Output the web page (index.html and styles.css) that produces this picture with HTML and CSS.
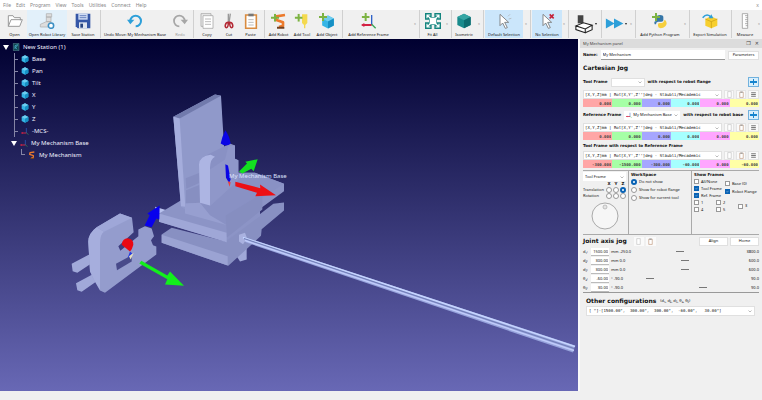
FILE: index.html
```html
<!DOCTYPE html>
<html lang="en">
<head>
<meta charset="utf-8">
<title>New Station (1)</title>
<link rel="stylesheet" href="styles.css">
</head>
<body>
<svg class="defs" aria-hidden="true">
  <symbol id="cube" viewBox="0 0 24 24"><path d="M12 1 22 6v12l-10 5-10-5V6z" fill="#36b5e6"/><path d="M2 6l10 5 10-5-10-5z" fill="#6fcdf0"/><path d="M12 11v12l10-5V6z" fill="#1790c4"/></symbol>
  <symbol id="plus" viewBox="0 0 12 12"><path d="M6 0v12M0 6h12" stroke="#7cb342" stroke-width="3" fill="none"/></symbol>
  <symbol id="axes" viewBox="0 0 24 24"><path d="M16 18V3" stroke="#2f62c8" stroke-width="2"/><path d="M16 18H2" stroke="#d32243" stroke-width="3"/><path d="m16 17 6 6" stroke="#3aa655" stroke-width="2"/><path d="m0 18 5-3v6z" fill="#d32243"/></symbol>
  <symbol id="arm" viewBox="0 0 24 24"><path d="M19 3 6 5l-1 5 11 4v5l-6 2" fill="none" stroke="#ec7a2c" stroke-width="4" stroke-linejoin="round"/><path d="M7 22h11" stroke="#704020" stroke-width="3"/></symbol>
  <symbol id="cursor" viewBox="0 0 24 24"><path d="M6 2v17l4-4 4 8 3-1-4-8h6z" fill="#fff" stroke="#777" stroke-width="1.3"/></symbol>
  <symbol id="page" viewBox="0 0 12 12"><path d="M3 1h6v10H3z" fill="#fff" stroke="#bbb"/></symbol>
  <symbol id="clip" viewBox="0 0 12 12"><path d="M3 2h6v9H3z" fill="#fff" stroke="#b98c6c"/><path d="M4 1h4v2H4z" fill="#999"/></symbol>
  <symbol id="lines" viewBox="0 0 12 12"><path d="M2 3h8M2 6h8M2 9h8" stroke="#666" stroke-width="1.5"/></symbol>
</svg>

<header>
  <nav class="menu" aria-label="Main menu">
    <a href="#">File</a><a href="#">Edit</a><a href="#">Program</a><a href="#">View</a><a href="#">Tools</a><a href="#">Utilities</a><a href="#">Connect</a><a href="#">Help</a>
    <span class="menu-close">x</span>
  </nav>
  <div class="toolbar">
    <button><svg viewBox="0 0 24 24"><path d="M2 20V4h7l2 3h9v4M2 20l4-10h17l-4 10z" fill="#fff" stroke="#9a9a9a" stroke-width="1.5"/></svg>Open</button>
    <button class="hover"><svg viewBox="0 0 24 24"><path d="M11 1h8v5h-8zM11 6h7v7h-7zM2 21v-4l9-4h7v8z" fill="#ddd" stroke="#aaa"/><circle cx="18" cy="19" r="4" fill="#fff" stroke="#3b8fc4" stroke-width="2.4"/></svg>Open Robot Library</button>
    <button><svg viewBox="0 0 24 24"><path d="M1 1h22v22H4l-3-3z" fill="#3556a6"/><path d="M5 1h14v9H5z" fill="#cfdcf4"/><path d="M6 14h12v9H6z" fill="#dfe4ee"/><path d="M7 4h10M7 7h10" stroke="#3556a6"/><path d="M8 16h4v6H8z" fill="#274380"/></svg>Save Station</button>
    <i class="sep"></i>
    <button><svg viewBox="0 0 24 24"><path d="M5 12a8 8 0 1 1 8 8" fill="none" stroke="#2d9fd9" stroke-width="3"/><path d="M0 10h11l-6 7z" fill="#2d9fd9"/></svg>Undo Move: My Mechanism Base</button>
    <button class="dim"><svg viewBox="0 0 24 24"><path d="M19 12a8 8 0 1 0-8 8" fill="none" stroke="#a6a6a6" stroke-width="2.6"/><path d="M24 10H13l6 7z" fill="#a6a6a6"/></svg>Redo</button>
    <i class="sep"></i>
    <button><svg viewBox="0 0 24 24"><path d="M3 1h15v19H3z" fill="#eee" stroke="#999"/><path d="M6 4h15v19H6z" fill="#fff" stroke="#999"/><path d="M9 9h9M9 13h9M9 17h9" stroke="#999"/></svg>Copy</button>
    <button><svg viewBox="0 0 24 24"><path d="M11 1v14M14 1l-2 14" stroke="#999" stroke-width="2"/><path d="M11 14c-5 0-6 8-3 8s3-4 3-8zM13 14c5 0 6 8 3 8s-3-4-3-8z" fill="none" stroke="#b32834" stroke-width="2.3"/></svg>Cut</button>
    <button><svg viewBox="0 0 24 24"><path d="M4 3h16v20H4z" fill="#fff" stroke="#d98b3f" stroke-width="2.4"/><path d="M8 1h8v4H8z" fill="#777"/><path d="M8 10h8M8 14h8M8 18h8" stroke="#999"/></svg>Paste</button>
    <i class="sep"></i>
    <button><svg viewBox="0 0 24 24"><use href="#arm" x="2"/><use href="#plus" x="0" y="1" width="12" height="12"/></svg>Add Robot</button>
    <button><svg viewBox="0 0 24 24"><path d="M12 2h8v13l-3 3v5h-2v-5l-3-3z" fill="#f4d94f"/><use href="#plus" x="1" y="1" width="12" height="12"/></svg>Add Tool</button>
    <button><svg viewBox="0 0 24 24"><use href="#cube" x="3" y="3" width="21" height="21"/><use href="#plus" x="0" y="0" width="12" height="12"/></svg>Add Object</button>
    <i class="sep"></i>
    <button><svg viewBox="0 0 24 24"><use href="#axes"/><use href="#plus" x="1" y="0" width="12" height="12"/></svg>Add Reference Frame</button>
    <span class="more">»</span>
    <i class="sep"></i>
    <button><svg viewBox="0 0 24 24"><path d="M0 0h10v6l4 0V0h10v10h-6v4h6v10H14v-6h-4v6H0V14h6v-4H0z" fill="#13847e"/><path d="M7 7h10v10H7z" fill="#fff"/><path d="M9 9 3 3m0 5V3h5M15 9l6-6m-5 0h5v5M9 15l-6 6m0-5v5h5M15 15l6 6m-5 0h5v-5" stroke="#fff" stroke-width="1.7" fill="none"/></svg>Fit All</button>
    <span class="more">»</span>
    <i class="sep"></i>
    <button><svg viewBox="0 0 24 24"><path d="M12 1 22 6v12l-10 5-10-5V6z" fill="#188a8c"/><path d="M2 6l10 5 10-5-10-5z" fill="#35a5a3"/><path d="M12 11v12l10-5V6z" fill="#0d6c70"/></svg>Isometric</button>
    <span class="more">»</span>
    <i class="sep"></i>
    <button class="active"><svg viewBox="0 0 24 24"><use href="#cursor"/><path d="m18 5 3-3M19 9l4-1" stroke="#aaa"/></svg>Default Selection</button>
    <span class="more">»</span>
    <i class="sep"></i>
    <button class="active"><svg viewBox="0 0 24 24"><use href="#cursor"/><path d="m16 2 6 6m0-6-6 6" stroke="#c4223a" stroke-width="2.4"/></svg>No Selection</button>
    <span class="more">»</span>
    <i class="sep"></i>
    <button class="tall" aria-label="Collision map"><svg viewBox="0 0 32 28"><path d="M6 0h9v13H6z" fill="#444"/><path d="m3 17 12-5 14 4-11 6zM3 17v6l15 5v-6M18 28l11-5v-7" fill="#fff" stroke="#222" stroke-width="1.7"/></svg><span class="caret"></span></button>
    <i class="sep"></i>
    <button class="tall" aria-label="Simulation speed"><svg viewBox="0 0 32 28"><path d="m3 5 14 8-14 8zM16 5l15 8-15 8z" fill="#2d9fd9"/></svg><span class="caret"></span></button>
    <span class="more">»</span>
    <i class="sep"></i>
    <button><svg viewBox="0 0 24 24"><path d="M7 12V6q0-3 5-3t5 3v5q0 2-3 2H9q-3 0-3 4H4q-2-5 3-5z" fill="#3576a8"/><path d="M18 11h2q4 5 0 9-3 3-7 3-4-1-4-4v-2q0-2 3-2h3q3 0 3-4z" fill="#f6cf3d"/><use href="#plus" x="0" y="0" width="12" height="12"/></svg>Add Python Program</button>
    <span class="more">»</span>
    <i class="sep"></i>
    <button><svg viewBox="0 0 24 24"><path d="m13 5 10 4v10l-9 4-9-4V9z" fill="#f7cf2e"/><path d="m5 9 9 4 9-4M14 13v10" stroke="#c79a12" fill="none"/><path d="M1 7q7-8 13 0" fill="none" stroke="#2d9fd9" stroke-width="2.4"/><path d="M10 8h7l-3-6z" fill="#2d9fd9"/></svg>Export Simulation</button>
    <i class="sep"></i>
    <button><svg viewBox="0 0 24 24"><path d="M8 1h8v22H8z" fill="#fff" stroke="#888"/><path d="M12 4h4M13 7h3M12 10h4M13 13h3M12 16h4M13 19h3" stroke="#888"/></svg>Measure</button>
    <span class="more">»</span>
  </div>
</header>

<main>
  <section class="view" aria-label="3D view">
    <svg class="scene" viewBox="0 40 578 351" preserveAspectRatio="xMidYMid meet">
      <g transform="translate(155 90) scale(.33333)">
        <path d="m0 352 40 12-5 12-32-8z" fill="#b9c2ee"/>
        <path d="m245 500 10 16 20-6v-60l-30 10z" fill="#a0a8d8"/>
        <path d="m20 435 30-20 160 40 145-112 32-4v24l-67 56-2 20-98 90L20 460z" fill="#8890c2"/>
        <path d="m20 436 198 64v28L20 460z" fill="#9ba3d3"/>
        <path d="m12 372 70-42 168-80h50l87 33v22l-72 53v22l-103 76L12 397z" fill="#8c94c6"/>
        <path d="m12 372 203 58v28L12 397z" fill="#9fa7d7"/>
        <path d="m55 82 125-67 18 4 9 150 5 180-100 26-34-23z" fill="#9099ca"/>
        <path d="m55 82 125-67 18 4L74 87z" fill="#717aac"/>
        <path d="m55 82 19 5 17 265-13-2z" fill="#a5addc"/>
        <path d="m92 266 42-16v30l-40 18zM93 302l42-16v54l-42 2z" fill="#878fc1"/>
        <path d="m90 342 45-2 77 38v28L90 372z" fill="#979fd0"/>
        <path d="M132 225q2-20 25-29l68-34 15 6v40l10 4v38h50l87 33-110 70-65 52-47-28-30-37z" fill="#8991c4"/>
        <path d="m165 240 45-30 10-40 20-2v40l10 4v60l-85 78z" fill="#8f97c9"/>
        <path d="M132 225q2-26 35-29l13 6q-14 6-15 33v113l-30-8z" fill="#adb5e3"/>
        <path d="m212 378 110-66v48L216 444z" fill="#868ec0"/>
        <path d="m252 436 18-6 6 16-12 18-12-8z" fill="#aab2e0"/>
      </g>
      <path d="m243 237 332 109-2 7-327-110z" fill="#97a3dc"/>
      <path d="m243 238 332 109" stroke="#c6d5ff" stroke-width="1.6"/>
      <path d="m244 239 330 110" stroke="#6f7cb4"/>
      <path d="m245 241 329 110" stroke="#c0ccfa" stroke-width="1.4"/>
      <g transform="translate(70 205) scale(.33333)">
        <path d="m5 178 60-32v30l-43 29-14-5zM18 236l60-32v28l-43 30-13-5z" fill="#a1a9d9"/>
        <path d="M55 115q-2-27 25-47l70-41 36 13 5 43-46 42 6 14 54-44V75l20-10 20 7 7 23-9 12 6 15 10 4v24L105 265l-15-7v-24l-16-4-14-30z" fill="#949ccd"/>
        <path d="M55 115q-2-27 25-47l22 14q-12 8-12 35v141l-16-28-14-30z" fill="#a6aedd"/>
        <path d="m80 68 70-41 36 13-84 42z" fill="#9fa7d8"/>
        <path d="m138 178 47-26v19l-44 26z" fill="#484a8a"/>
      </g>
      <g transform="translate(70 90) scale(.33333)">
        <path d="m208 522 6-8 78 44 8-12 42 43-57-4 7-16z" fill="#13ef1c"/>
        <path d="m224 408 15-31-7-5 37-24-1 42-9-3-14 26z" fill="#0800ed"/>
        <path d="M155 466q2-20 18-20 18 2 17 20-3 13-10 20z" fill="#e90813"/>
        <path d="m180 486-7 20 15-13z" fill="#253be0"/><path d="m177 500 5 10 9-20z" fill="#e5dfc0"/>
        <path d="M452 162q3-18 14-40 13 18 16 41-14 10-30-1zM466 224l8 4 8 43-5 9-9-15z" fill="#0905e5"/>
        <path d="m507 246 24-24-5-5 37-8-12 36-7-7-27 14z" fill="#13df20"/>
        <path d="m496 277 75 19-1-11 48 32-62 3 5-10-65-20z" fill="#ed1015"/>
        <path d="m473 275 6 17 3-14z" fill="#e94343"/>
      </g>
      <text class="scene-label" x="229" y="178">My Mechanism Base</text>
    </svg>
    <ul class="tree">
      <li><div class="node"><span class="fold"></span><svg viewBox="0 0 24 24"><path d="M4 1h17v22H4z" fill="#0d4450" stroke="#9cc"/><path d="M9 18V8l8-3-3 6-4 1 5 7" fill="none" stroke="#5bd" stroke-width="2"/></svg>New Station (1)</div>
        <ul class="branch">
          <li class="node leaf"><svg><use href="#cube"/></svg>Base</li>
          <li class="node leaf"><svg><use href="#cube"/></svg>Pan</li>
          <li class="node leaf"><svg><use href="#cube"/></svg>Tilt</li>
          <li class="node leaf"><svg><use href="#cube"/></svg>X</li>
          <li class="node leaf"><svg><use href="#cube"/></svg>Y</li>
          <li class="node leaf"><svg><use href="#cube"/></svg>Z</li>
          <li class="node leaf"><svg><use href="#axes"/></svg>-MCS-</li>
        </ul>
        <ul class="sub">
          <li><div class="node"><span class="fold"></span><svg><use href="#axes"/></svg>My Mechanism Base</div>
            <ul class="sub-leaf"><li class="node"><span class="elbow"></span><svg><use href="#arm"/></svg>My Mechanism</li></ul>
          </li>
        </ul>
      </li>
    </ul>
  </section>

  <aside class="panel">
    <div class="panel-title"><span>My Mechanism panel</span><button aria-label="Float">❐</button><button aria-label="Close">✕</button></div>
    <div class="body">
      <div class="row name"><label for="name">Name:</label><input id="name" value="My Mechanism"><button class="push">Parameters</button></div>
      <h2>Cartesian Jog</h2>
      <div class="row"><label for="tool">Tool Frame</label><select id="tool" class="tool-select"><option></option></select><b>with respect to robot flange</b><button class="add" aria-label="Add tool"></button></div>
      <div class="pose"><select aria-label="Tool pose format"><option>[X,Y,Z]mm | Rot[X,Y',Z'']deg - Stäubli/Mecademic</option></select><button aria-label="Copy"><svg><use href="#page"/></svg></button><button aria-label="Paste"><svg><use href="#clip"/></svg></button><button aria-label="Options"><svg><use href="#lines"/></svg></button></div>
      <div class="cells"><input aria-label="X" value="0.000"><input aria-label="Y" value="0.000"><input aria-label="Z" value="0.000"><input aria-label="RX" value="0.000"><input aria-label="RY" value="0.000"><input aria-label="RZ" value="0.000"></div>
      <div class="row"><label for="ref">Reference Frame</label><span class="ref-box"><svg><use href="#axes"/></svg><select id="ref"><option>My Mechanism Base</option></select></span><b>with respect to robot base</b><button class="add" aria-label="Add frame"></button></div>
      <div class="pose"><select aria-label="Reference pose format"><option>[X,Y,Z]mm | Rot[X,Y',Z'']deg - Stäubli/Mecademic</option></select><button aria-label="Copy"><svg><use href="#page"/></svg></button><button aria-label="Paste"><svg><use href="#clip"/></svg></button><button aria-label="Options"><svg><use href="#lines"/></svg></button></div>
      <div class="cells"><input aria-label="X" value="0.000"><input aria-label="Y" value="0.000"><input aria-label="Z" value="0.000"><input aria-label="RX" value="0.000"><input aria-label="RY" value="0.000"><input aria-label="RZ" value="0.000"></div>
      <div class="row short"><b>Tool Frame with respect to Reference Frame</b></div>
      <div class="pose"><select aria-label="Relative pose format"><option>[X,Y,Z]mm | Rot[X,Y',Z'']deg - Stäubli/Mecademic</option></select><button aria-label="Copy"><svg><use href="#page"/></svg></button><button aria-label="Paste"><svg><use href="#clip"/></svg></button><button aria-label="Options"><svg><use href="#lines"/></svg></button></div>
      <div class="cells"><input aria-label="X" value="-300.000"><input aria-label="Y" value="-1500.000"><input aria-label="Z" value="-300.000"><input aria-label="RX" value="-60.000"><input aria-label="RY" value="0.000"><input aria-label="RZ" value="-60.000"></div>

      <div class="options">
        <div class="jog">
          <select aria-label="Jog frame"><option>Tool Frame</option></select>
          <div class="axis-grid">
            <span></span><b>X</b><b>Y</b><b>Z</b>
            <span>Translation</span><input type="radio" name="ax" aria-label="Translate X"><input type="radio" name="ax" aria-label="Translate Y"><input type="radio" name="ax" aria-label="Translate Z" checked>
            <span>Rotation</span><input type="radio" name="ax" aria-label="Rotate X"><input type="radio" name="ax" aria-label="Rotate Y"><input type="radio" name="ax" aria-label="Rotate Z">
          </div>
          <svg class="dial" viewBox="0 0 28 28" role="img" aria-label="Jog dial"><circle cx="14" cy="14" r="13" fill="#f6f6f6" stroke="#aaa"/><circle cx="14" cy="5" r="2" fill="#e4e4e4" stroke="#aaa" stroke-width=".7"/></svg>
        </div>
        <div class="workspace">
          <b>WorkSpace</b>
          <label><input type="radio" name="ws" checked>Do not show</label>
          <label><input type="radio" name="ws">Show for robot flange</label>
          <label><input type="radio" name="ws">Show for current tool</label>
        </div>
        <div class="frames">
          <b>Show Frames</b>
          <div class="frame-cols">
            <div><label><input type="checkbox">All/None</label><label><input type="checkbox" checked>Tool Frame</label><label><input type="checkbox" checked>Ref. Frame</label></div>
            <div class="right"><label><input type="checkbox">Base (0)</label><label><input type="checkbox" checked>Robot Flange</label></div>
          </div>
          <div class="joints-shown">
            <label><input type="checkbox">1</label><label><input type="checkbox">2</label><label class="span"><input type="checkbox">3</label><label><input type="checkbox">4</label><label><input type="checkbox">5</label>
          </div>
        </div>
      </div>

      <div class="joint-head"><h2>Joint axis jog</h2><button class="mini" aria-label="Copy joints"><svg><use href="#page"/></svg></button><button class="mini" aria-label="Paste joints"><svg><use href="#clip"/></svg></button><button class="push first">Align</button><button class="push">Home</button></div>
      <div class="joints">
        <div class="joint"><label for="j1">d₁:</label><input id="j1" value="1500.00"><span>mm -250.0</span><input type="range" aria-label="Joint 1" min="-250" max="3800" value="1500"><span>3800.0</span></div>
        <div class="joint"><label for="j2">d₂:</label><input id="j2" value="300.00"><span>mm 0.0</span><input type="range" aria-label="Joint 2" min="0" max="600" value="300"><span>600.0</span></div>
        <div class="joint"><label for="j3">d₃:</label><input id="j3" value="300.00"><span>mm 0.0</span><input type="range" aria-label="Joint 3" min="0" max="600" value="300"><span>600.0</span></div>
        <div class="joint"><label for="j4">θ₄:</label><input id="j4" value="-60.00"><span>° -90.0</span><input type="range" aria-label="Joint 4" min="-90" max="90" value="-60"><span>90.0</span></div>
        <div class="joint"><label for="j5">θ₅:</label><input id="j5" value="30.00"><span>° -90.0</span><input type="range" aria-label="Joint 5" min="-90" max="90" value="30"><span>90.0</span></div>
      </div>
      <div class="other"><h2><label for="conf">Other configurations</label></h2><span>(d₁, d₂, d₃, θ₄, θ₅)</span></div>
      <select id="conf" class="conf"><option>[ °]-[1500.00°,&nbsp; 300.00°,&nbsp; 300.00°,&nbsp; -60.00°,&nbsp;&nbsp; 30.00°]</option></select>
    </div>
  </aside>
</main>
<footer></footer>
</body>
</html>
```
FILE: styles.css
```css
* { box-sizing: border-box; }
body {
  margin: 0;
  min-height: 100vh;
  display: grid;
  grid-template-rows: auto 1fr 9px;
  background: #f0f0f0;
  color: #111;
  font: 4px/6px "Noto Sans", "Open Sans", sans-serif;
}
.defs { position: absolute; width: 0; height: 0; }
ul { list-style: none; margin: 0; padding: 0; }
h2 { margin: 0; font-size: 6px; line-height: 12px; }
h2, .row b, .row label { font-family: "DejaVu Sans", sans-serif; font-weight: bold; }
button, input, select { font: inherit; color: inherit; margin: 0; padding: 0; border: 0; border-radius: 0; min-width: 0; }
button { background: none; }

.menu { display: flex; gap: 5px; height: 10px; padding: 0 3px; background: #fff; font-size: 5px; line-height: 10px; }
.menu a { color: #888; text-decoration: none; }
.menu-close { margin-left: auto; color: #888; }

.toolbar {
  display: grid;
  grid-template-columns: 25fr 40fr 32fr 3fr 66fr 24fr 3fr 24fr 20fr 23fr 4fr 25fr 22fr 28fr 3fr 49fr 25fr 3fr 23fr 6fr 2fr 24fr 6fr 3fr 38fr 6fr 3fr 30fr 5fr 3fr 30fr 3fr 25fr 6fr 3fr 46fr 5fr 3fr 38fr 4fr 24fr 5fr;
  height: 29px;
  padding: 0 0 1px 2px;
}
.toolbar button { display: flex; flex-direction: column; align-items: center; justify-content: flex-end; white-space: nowrap; gap: 3px; }
.toolbar button svg { width: 16px; height: 16px; flex: none; }
.toolbar .hover { background: #e2f0fa; }
.toolbar .active { background: #cbe6fb; }
.toolbar .dim { color: #999; }
.toolbar .tall { flex-direction: row; align-items: center; justify-content: center; gap: 1px; }
.toolbar .tall svg { width: 20px; height: 20px; }
.sep { justify-self: center; width: 1px; background: #d0d0d0; }
.more { align-self: center; text-align: right; padding-right: 2px; color: #777; }
.caret { border: 1px solid transparent; border-top: 2px solid #222; border-bottom: 0; }

main { display: grid; grid-template-columns: minmax(0, 1fr) 184px; }
.view { display: grid; background: linear-gradient(#000030, #6868b5); color: #f2f2ff; min-height: 0; overflow: hidden; }
.scene, .tree { grid-area: 1 / 1; }
.scene { width: 100%; height: 100%; min-height: 0; }
.scene-label { font-size: 6px; fill: #dfe3ff; }
.tree { z-index: 1; padding: 2px 3px; font-size: 6px; }
.node { display: flex; align-items: center; gap: 3px; height: 12px; line-height: 12px; }
.node svg { width: 8px; height: 8px; }
.fold { border: 3px solid transparent; border-top: 5px solid #fff; border-bottom: 0; }
.branch { margin-left: 11px; border-left: 1px solid #8585a5; }
.leaf::before { content: ""; width: 3px; height: 1px; background: #8585a5; }
.sub { margin-left: 8px; }
.sub-leaf { margin-left: 10px; }
.elbow { width: 4px; height: 6px; border: solid #8585a5; border-width: 0 0 1px 1px; align-self: flex-start; }

.panel { border-left: 2px solid #fafafa; background: #f0f0f0; }
.panel-title { display: flex; gap: 4px; height: 9px; padding: 0 3px; background: #dcdcdc; line-height: 9px; color: #444; }
.panel-title span { flex: 1; }
.panel-title button { font: 5px/9px "DejaVu Sans", sans-serif; }
.body { padding: 0 3px; }
.row { display: flex; align-items: center; gap: 3px; height: 16px; white-space: nowrap; }
.row.name { height: 14px; }
.row.short { height: 11px; }
.name input { flex: 1; height: 10px; padding: 0 2px; background: #fff; border-bottom: 1px solid #999; }
.push { width: 31px; height: 9px; background: #fff; border: 1px solid #e0e0e0; }
.add { width: 11px; height: 10px; margin-left: auto; border: 1px solid #72b2de; background: linear-gradient(#1684ce, #1684ce) center / 7px 2px no-repeat, linear-gradient(#1684ce, #1684ce) center / 1px 6px no-repeat, #d9effc; }
select {
  appearance: none;
  height: 9px;
  padding: 0 8px 0 2px;
  border: 1px solid #e0e0e0;
  background: url("data:image/svg+xml,%3Csvg xmlns='http://www.w3.org/2000/svg' viewBox='0 0 8 8'%3E%3Cpath d='m1 3 3 3 3-3' fill='none' stroke='%23777'/%3E%3C/svg%3E") right 2px center / 4px 4px no-repeat #fff;
}
.tool-select { width: 34px; }
.ref-box { display: flex; align-items: center; background: #fff; padding-left: 2px; }
.ref-box svg { width: 6px; height: 6px; }
.ref-box select { border-width: 0; padding-left: 1px; }
.pose { display: grid; grid-template-columns: minmax(0, 1fr) 10px 10px 11px; gap: 2px; }
.pose select { font-family: "DejaVu Sans Mono", monospace; padding-left: 1px; }
.pose button { display: grid; place-items: center; background: #fafafa; border: 1px solid #e4e4e4; }
.pose svg, .mini svg { display: block; width: 7px; height: 7px; }
.cells { display: grid; grid-template-columns: repeat(6, minmax(0, 1fr)); }
.cells input { height: 8px; padding-right: 1px; text-align: right; font-family: "DejaVu Sans Mono", monospace; font-weight: bold; color: #444; }
.cells :nth-child(1) { background: #ffa6a6; }
.cells :nth-child(2) { background: #a6ffa6; }
.cells :nth-child(3) { background: #a6a6ff; }
.cells :nth-child(4) { background: #a6ffff; }
.cells :nth-child(5) { background: #ffa6ff; }
.cells :nth-child(6) { background: #ffffa6; }

.options { display: grid; grid-template-columns: 45fr 63fr 68fr; margin-top: 2px; height: 65px; border: solid #aaa; border-width: 1px 0; white-space: nowrap; }
.options > div { padding: 1px 2px; border-left: 1px solid #aaa; }
.options > .jog { padding-left: 0; border: 0; }
.jog select { display: block; width: 100%; border-width: 0; }
.axis-grid { display: grid; grid-template-columns: 1fr 6px 6px 6px; gap: 0 1px; align-items: center; justify-items: center; }
.axis-grid span { justify-self: start; }
.dial { display: block; width: 28px; height: 28px; margin: 3px auto 0; }
input[type="radio"], input[type="checkbox"] { appearance: none; flex: none; width: 5px; height: 5px; border: 1px solid #999; background: #fff; }
input[type="radio"] { border-radius: 50%; width: 6px; height: 6px; }
input[type="radio"]:checked { border: 2px solid #0862b4; }
input[type="checkbox"]:checked { border-color: #0862b4; background: url("data:image/svg+xml,%3Csvg xmlns='http://www.w3.org/2000/svg' viewBox='0 0 8 8'%3E%3Cpath d='m1 4 2 2 4-4' fill='none' stroke='white'/%3E%3C/svg%3E") center / contain no-repeat #0862b4; }
.options label { display: flex; align-items: center; gap: 2px; height: 7px; }
.options b { display: block; font-family: "DejaVu Sans", sans-serif; }
.workspace label + label { margin-top: 1px; }
.frame-cols { display: grid; grid-template-columns: 31px 1fr; }
.frame-cols .right { padding-top: 2px; }
.right label + label { margin-top: 1px; }
.joints-shown { display: grid; grid-template-columns: 22px 22px 1fr; }
.joints-shown .span { grid-area: 1 / 3 / 3; align-self: center; }

.joint-head { display: flex; align-items: center; height: 12px; gap: 2px; }
.mini { width: 10px; height: 9px; display: grid; place-items: center; background: #fafafa; }
.mini:nth-child(2) { margin-left: 5px; }
.push.first { margin-left: auto; }
.joint-head .push { width: 29px; }
.joints { border-bottom: 1px solid #999; }
.joint { display: flex; align-items: center; height: 9px; white-space: nowrap; }
.joint label { width: 8px; }
.joint span { min-width: 17px; }
.joint span:last-child { text-align: right; }
.joint input:not([type="range"]) { width: 18px; height: 8px; padding-right: 1px; margin-right: 2px; text-align: right; background: #fff; border-bottom: 1px solid #bbb; }
.joint input[type="range"] { flex: 1; appearance: none; background: none; height: 8px; }
.joint input[type="range"]::-webkit-slider-thumb { appearance: none; width: 8px; height: 1px; background: #777; }
.other { display: flex; align-items: center; gap: 4px; height: 13px; padding: 3px 3px 0; }
.conf { display: block; width: calc(100% - 7px); height: 10px; margin-left: 3px; font-family: "DejaVu Sans Mono", monospace; }
```
